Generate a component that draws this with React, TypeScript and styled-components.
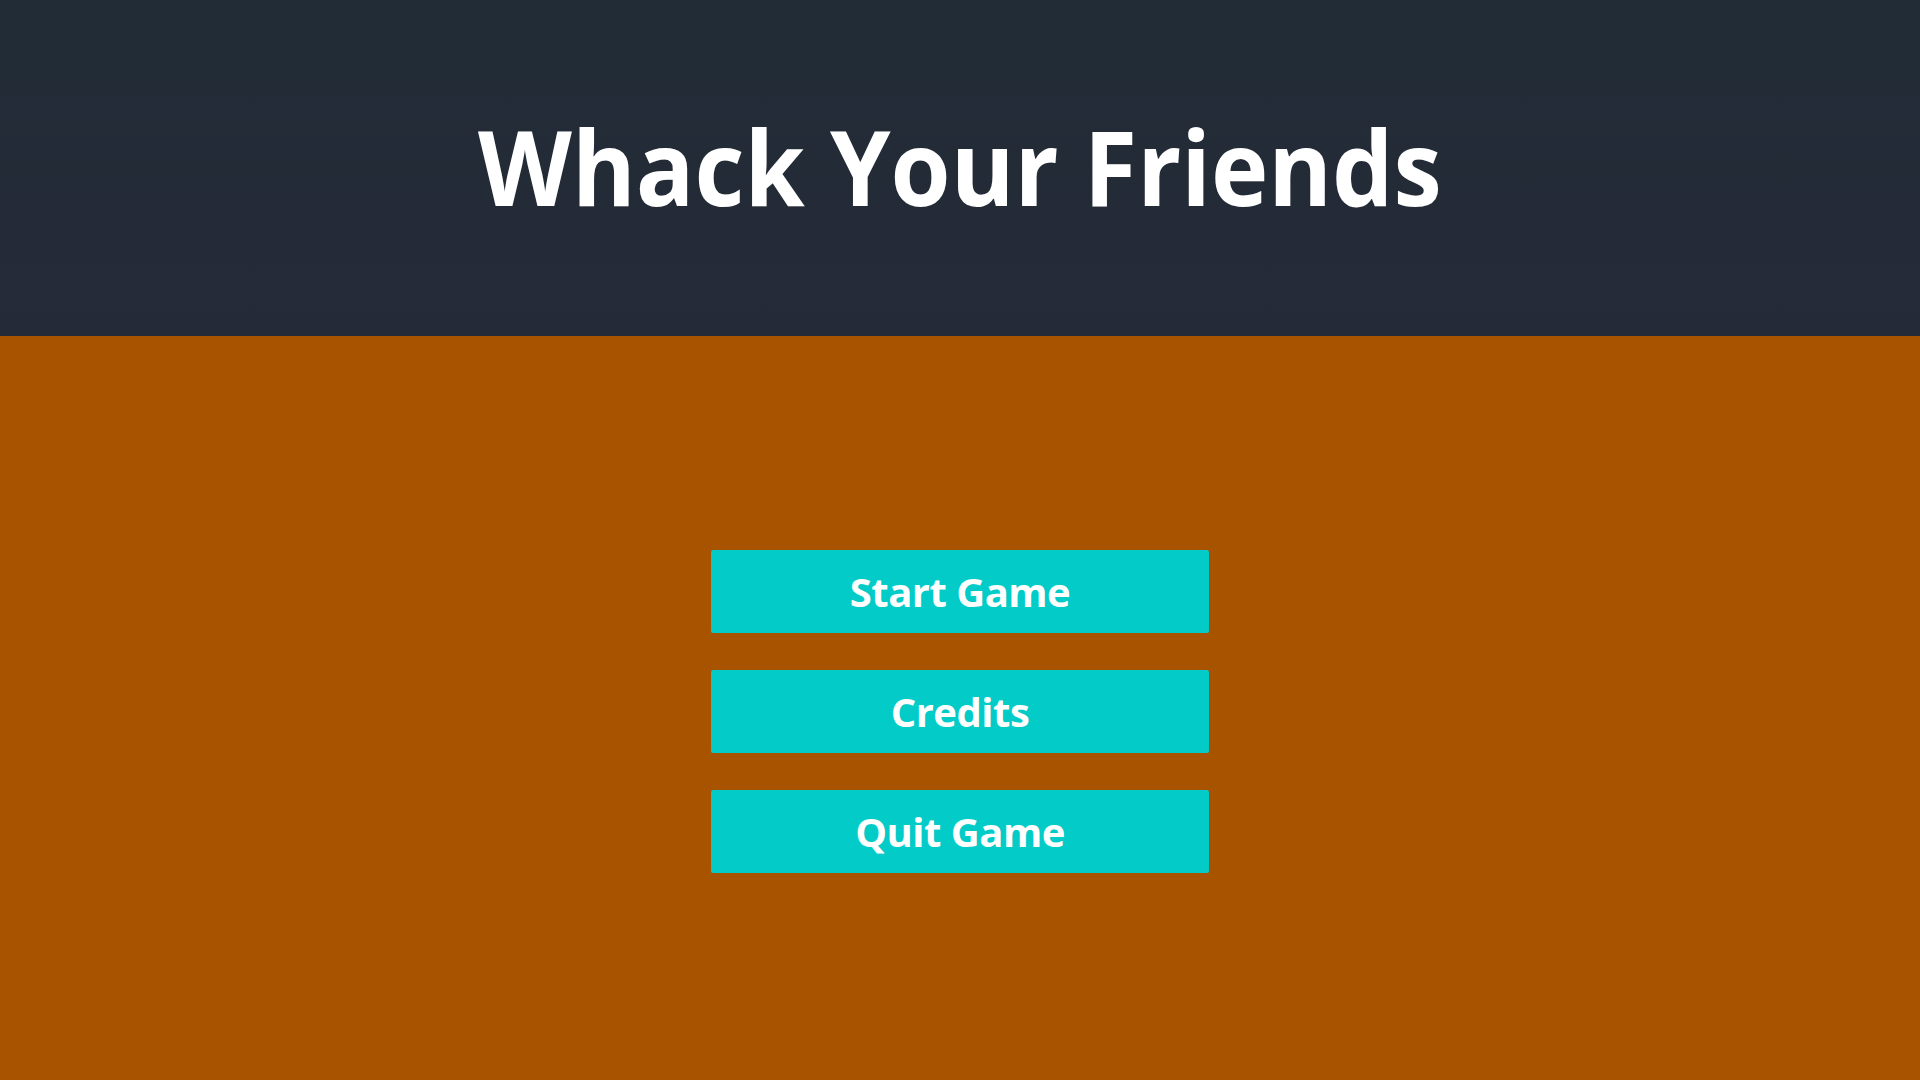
import React from "react";
import styled, { createGlobalStyle } from "styled-components";

const Global = createGlobalStyle`
  html, body { margin: 0; padding: 0; }
  body { font-family: "Open Sans", "Noto Sans", sans-serif; background: #a85300; }
`;

const Page = styled.div`
  width: 1920px;
  height: 1080px;
  display: flex;
  flex-direction: column;
  background: #a85300;
  overflow: hidden;
`;

const Header = styled.header`
  height: 336px;
  flex: none;
  background: linear-gradient(180deg, #212c36 0%, #252a38 100%);
  display: flex;
  justify-content: center;
  align-items: flex-start;
`;

const Title = styled.h1`
  margin: 0;
  padding-top: 91px;
  font-family: "Open Sans", "Noto Sans", sans-serif;
  font-weight: 700;
  font-size: 104px;
  line-height: 150px;
  color: #ffffff;
  letter-spacing: 0;
  white-space: nowrap;
  transform: scaleX(0.934);
  transform-origin: center top;
`;

const Menu = styled.nav`
  flex: 1;
  display: flex;
  flex-direction: column;
  align-items: center;
  padding-top: 214px;
  gap: 37px;
`;

const MenuButton = styled.button`
  width: 498px;
  height: 83px;
  border: none;
  border-radius: 2px;
  background: #02cbc8;
  color: #ffffff;
  font-family: "Open Sans", "Noto Sans", sans-serif;
  font-weight: 700;
  font-size: 40px;
  letter-spacing: -0.5px;
  cursor: pointer;
  padding: 0;
`;

export default function App() {
  return (
    <Page>
      <Global />
      <Header>
        <Title>Whack Your Friends</Title>
      </Header>
      <Menu>
        <MenuButton>Start Game</MenuButton>
        <MenuButton>Credits</MenuButton>
        <MenuButton>Quit Game</MenuButton>
      </Menu>
    </Page>
  );
}
